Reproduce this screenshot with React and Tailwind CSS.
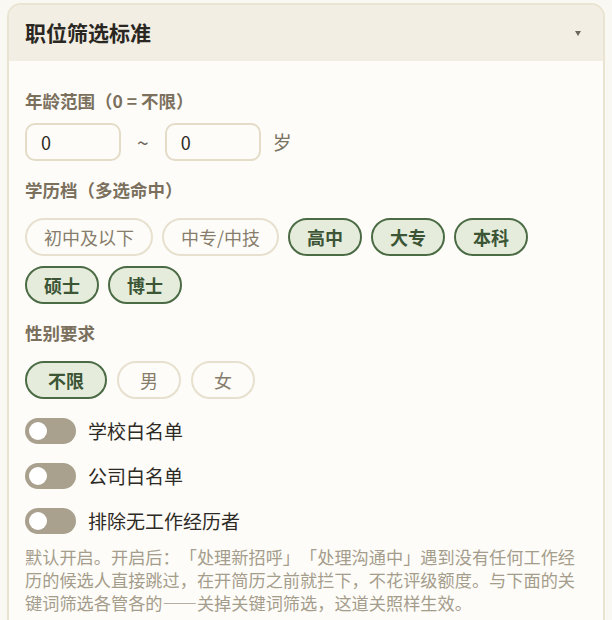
import { useState } from "react";

const EDU = [
  { label: "初中及以下", on: false },
  { label: "中专/中技", on: false },
  { label: "高中", on: true },
  { label: "大专", on: true },
  { label: "本科", on: true },
  { label: "硕士", on: true },
  { label: "博士", on: true },
];

const GENDER = ["不限", "男", "女"];

const TOGGLES = ["学校白名单", "公司白名单", "排除无工作经历者"];

function Chip({ label, on, onClick, wide }) {
  return (
    <button
      onClick={onClick}
      className={`h-[38px] rounded-full border-2 text-[18px] leading-[24px] ${wide ? "px-[21px]" : "px-[17px]"} ${
        on
          ? "bg-[#e5ecdc] border-[#4b6b45] text-[#3b5535] font-bold"
          : "bg-[#fdfcf8] border-[#e7e0ce] text-[#877d6c]"
      }`}
    >
      {label}
    </button>
  );
}

function Toggle({ label }) {
  const [on, setOn] = useState(false);
  return (
    <div className="flex items-center gap-3 h-[26px]">
      <button
        onClick={() => setOn(!on)}
        className={`w-[51px] h-[26px] rounded-full flex items-center px-[4px] ${on ? "bg-[#4b6b45] justify-end" : "bg-[#a9a08e] justify-start"}`}
      >
        <span className="w-[18px] h-[18px] rounded-full bg-white" />
      </button>
      <span className="text-[19px] text-[#2d2a25]">{label}</span>
    </div>
  );
}

export default function App() {
  const [edu, setEdu] = useState(EDU);
  const [gender, setGender] = useState(0);

  return (
    <div
      lang="zh-CN"
      className="min-h-screen bg-[#faf8f2] pt-[3px] px-[7px] [text-spacing-trim:space-all]"
      style={{ fontFamily: '"Noto Sans CJK SC", "Noto Sans", sans-serif' }}
    >
      <div className="rounded-[14px] border-2 border-[#e9e3d2] bg-[#fdfcf8] overflow-hidden">
        {/* Header */}
        <div className="h-[56px] flex items-center justify-between pl-4 pr-[22px] bg-[#f2eee3]">
          <h2 className="text-[21px] font-bold text-[#2a2722]">职位筛选标准</h2>
          <span className="w-0 h-0 border-l-[3px] border-r-[3px] border-t-[5px] border-l-transparent border-r-transparent border-t-[#6e685c]" />
        </div>

        {/* Body */}
        <div className="px-4 pt-[28px] pb-6">
          <div className="text-[17.5px] leading-[24px] font-bold text-[#7b705d]">年龄范围（0 = 不限）</div>
          <div className="mt-[10px] flex items-center">
            <input
              defaultValue="0"
              className="w-[96px] h-[38px] rounded-[10px] border-2 border-[#e4dcc8] bg-[#fdfcf8] px-[14px] text-[18px] text-[#2d2a25] outline-none"
            />
            <span className="mx-[16px] text-[21px] leading-none text-[#6e685c]">~</span>
            <input
              defaultValue="0"
              className="w-[96px] h-[38px] rounded-[10px] border-2 border-[#e4dcc8] bg-[#fdfcf8] px-[14px] text-[18px] text-[#2d2a25] outline-none"
            />
            <span className="ml-3 text-[19px] text-[#7a7262]">岁</span>
          </div>

          <div className="mt-[17px] text-[17.5px] leading-[24px] font-bold text-[#7b705d]">学历档（多选命中）</div>
          <div className="mt-4 flex flex-wrap gap-x-[9px] gap-y-[10px]">
            {edu.map((e, i) => (
              <Chip
                key={e.label}
                label={e.label}
                on={e.on}
                onClick={() => setEdu(edu.map((x, j) => (j === i ? { ...x, on: !x.on } : x)))}
              />
            ))}
          </div>

          <div className="mt-[17px] text-[17.5px] leading-[24px] font-bold text-[#7b705d]">性别要求</div>
          <div className="mt-4 flex gap-[10px]">
            {GENDER.map((g, i) => (
              <Chip key={g} label={g} on={gender === i} wide onClick={() => setGender(i)} />
            ))}
          </div>

          <div className="mt-[19px] flex flex-col gap-[19px]">
            {TOGGLES.map((t) => (
              <Toggle key={t} label={t} />
            ))}
          </div>

          <p className="mt-[11px] text-[17.2px] leading-[23px] text-[#a59d8c]">
            默认开启。开启后：「处理新招呼」「处理沟通中」遇到没有任何工作经历的候选人直接跳过，在开简历之前就拦下，不花评级额度。与下面的关键词筛选各管各的——关掉关键词筛选，这道关照样生效。
          </p>
        </div>
      </div>
    </div>
  );
}
